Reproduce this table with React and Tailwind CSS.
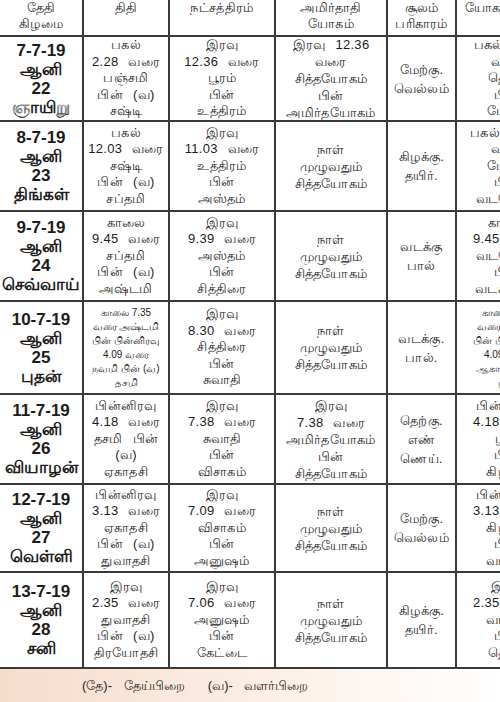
const FONT = { fontFamily: '"Liberation Sans", "Noto Sans", sans-serif' };

const headers = [
  ['தேதி', 'கிழமை'],
  ['திதி'],
  ['நட்சத்திரம்'],
  ['அமிர்தாதி', 'யோகம்'],
  ['சூலம்', 'பரிகாரம்'],
  ['யோகம் நேரம்'],
];

const rows = [
  {
    date: ['7-7-19', 'ஆனி', '22', 'ஞாயிறு'],
    thithi: ['பகல்', '2.28 வரை', 'பஞ்சமி', 'பின் (வ)', 'சஷ்டி'],
    star: ['இரவு', '12.36 வரை', 'பூரம்', 'பின்', 'உத்திரம்'],
    yogam: ['இரவு 12.36', 'வரை', 'சித்தயோகம்', 'பின்', 'அமிர்தயோகம்'],
    soolam: ['மேற்கு.', 'வெல்லம்'],
    last: ['பகல் 2.28', 'வரை', 'தெற்கு', 'பின்', 'மேற்கு'],
  },
  {
    date: ['8-7-19', 'ஆனி', '23', 'திங்கள்'],
    thithi: ['பகல்', '12.03 வரை', 'சஷ்டி', 'பின் (வ)', 'சப்தமி'],
    star: ['இரவு', '11.03 வரை', 'உத்திரம்', 'பின்', 'அஸ்தம்'],
    yogam: ['நாள்', 'முழுவதும்', 'சித்தயோகம்'],
    soolam: ['கிழக்கு.', 'தயிர்.'],
    last: ['பகல் 12.03', 'வரை', 'மேற்கு', 'பின்', 'வடமேற்கு'],
  },
  {
    date: ['9-7-19', 'ஆனி', '24', 'செவ்வாய்'],
    thithi: ['காலை', '9.45 வரை', 'சப்தமி', 'பின் (வ)', 'அஷ்டமி'],
    star: ['இரவு', '9.39 வரை', 'அஸ்தம்', 'பின்', 'சித்திரை'],
    yogam: ['நாள்', 'முழுவதும்', 'சித்தயோகம்'],
    soolam: ['வடக்கு', 'பால்'],
    last: ['காலை', '9.45 வரை', 'வடமேற்கு', 'பின்', 'வடகிழக்கு'],
  },
  {
    date: ['10-7-19', 'ஆனி', '25', 'புதன்'],
    small: true,
    thithi: ['காலை 7.35', 'வரை அஷ்டமி', 'பின் பின்னிரவு', '4.09 வரை', 'நவமி பின் (வ)', 'தசமி'],
    star: ['இரவு', '8.30 வரை', 'சித்திரை', 'பின்', 'சுவாதி'],
    yogam: ['நாள்', 'முழுவதும்', 'சித்தயோகம்'],
    soolam: ['வடக்கு.', 'பால்.'],
    last: ['காலை 7.35', 'வரை வடக்கு', 'பின் பின்னிரவு', '4.09 வரை', 'ஆகாயம் பின்', 'பூமி'],
  },
  {
    date: ['11-7-19', 'ஆனி', '26', 'வியாழன்'],
    thithi: ['பின்னிரவு', '4.18 வரை', 'தசமி பின்', '(வ)', 'ஏகாதசி'],
    star: ['இரவு', '7.38 வரை', 'சுவாதி', 'பின்', 'விசாகம்'],
    yogam: ['இரவு', '7.38 வரை', 'அமிர்தயோகம்', 'பின்', 'சித்தயோகம்'],
    soolam: ['தெற்கு.', 'எண்', 'ணெய்.'],
    last: ['பின்னிரவு', '4.18 வரை', 'பூமி', 'பின்', 'கிழக்கு'],
  },
  {
    date: ['12-7-19', 'ஆனி', '27', 'வெள்ளி'],
    thithi: ['பின்னிரவு', '3.13 வரை', 'ஏகாதசி', 'பின் (வ)', 'துவாதசி'],
    star: ['இரவு', '7.09 வரை', 'விசாகம்', 'பின்', 'அனுஷம்'],
    yogam: ['நாள்', 'முழுவதும்', 'சித்தயோகம்'],
    soolam: ['மேற்கு.', 'வெல்லம்'],
    last: ['பின்னிரவு', '3.13 வரை', 'கிழக்கு', 'பின்', 'வடக்கு'],
  },
  {
    date: ['13-7-19', 'ஆனி', '28', 'சனி'],
    thithi: ['இரவு', '2.35 வரை', 'துவாதசி', 'பின் (வ)', 'திரயோதசி'],
    star: ['இரவு', '7.06 வரை', 'அனுஷம்', 'பின்', 'கேட்டை'],
    yogam: ['நாள்', 'முழுவதும்', 'சித்தயோகம்'],
    soolam: ['கிழக்கு.', 'தயிர்.'],
    last: ['இரவு', '2.35 வரை', 'வடக்கு', 'பின்', 'தெற்கு'],
  },
];

function Cell({ lines, className = '' }) {
  return (
    <div className={`bg-white flex flex-col items-center justify-center text-center overflow-hidden ${className}`}>
      {lines.map((l, i) => (
        <span key={i} className="whitespace-nowrap">
          {l}
        </span>
      ))}
    </div>
  );
}

const body = 'text-[13px] leading-[16.5px] tracking-[0.3px] [word-spacing:6px]';
const small = 'text-[10px] leading-[14px]';

export default function App() {
  return (
    <div className="w-[500px] h-[702px] overflow-hidden bg-white text-[#1c1c1c]" style={FONT}>
      <div className="w-[557px] grid grid-cols-[82px_84px_104px_110px_67px_100px] grid-rows-[35px_83px_88px_88px_91px_88px_86px_94px] gap-[2px] bg-[#3a3a3a] pb-[2px]">
        {headers.map((h, i) => (
          <Cell key={i} lines={h} className="text-[13px] leading-[16px] tracking-[0.3px] justify-start" />
        ))}
        {rows.map((r, i) => (
          <div key={i} className="contents">
            <Cell lines={r.date} className="text-[17px] leading-[19px] font-bold" />
            <Cell lines={r.thithi} className={r.small ? small : body} />
            <Cell lines={r.star} className={body} />
            <Cell lines={r.yogam} className="text-[13px] leading-[17px] tracking-[0.3px] [word-spacing:6px]" />
            <Cell lines={r.soolam} className="text-[13px] leading-[19px] tracking-[0.3px]" />
            <Cell lines={r.last} className={r.small ? small : body} />
          </div>
        ))}
      </div>
      <div className="h-[33px] bg-gradient-to-r from-[#f6dccb] via-[#fbeee5] to-white flex items-center pl-[82px] text-[13px] [word-spacing:8px]">
        (தே)- தேய்பிறை&nbsp;&nbsp;(வ)- வளர்பிறை
      </div>
    </div>
  );
}
